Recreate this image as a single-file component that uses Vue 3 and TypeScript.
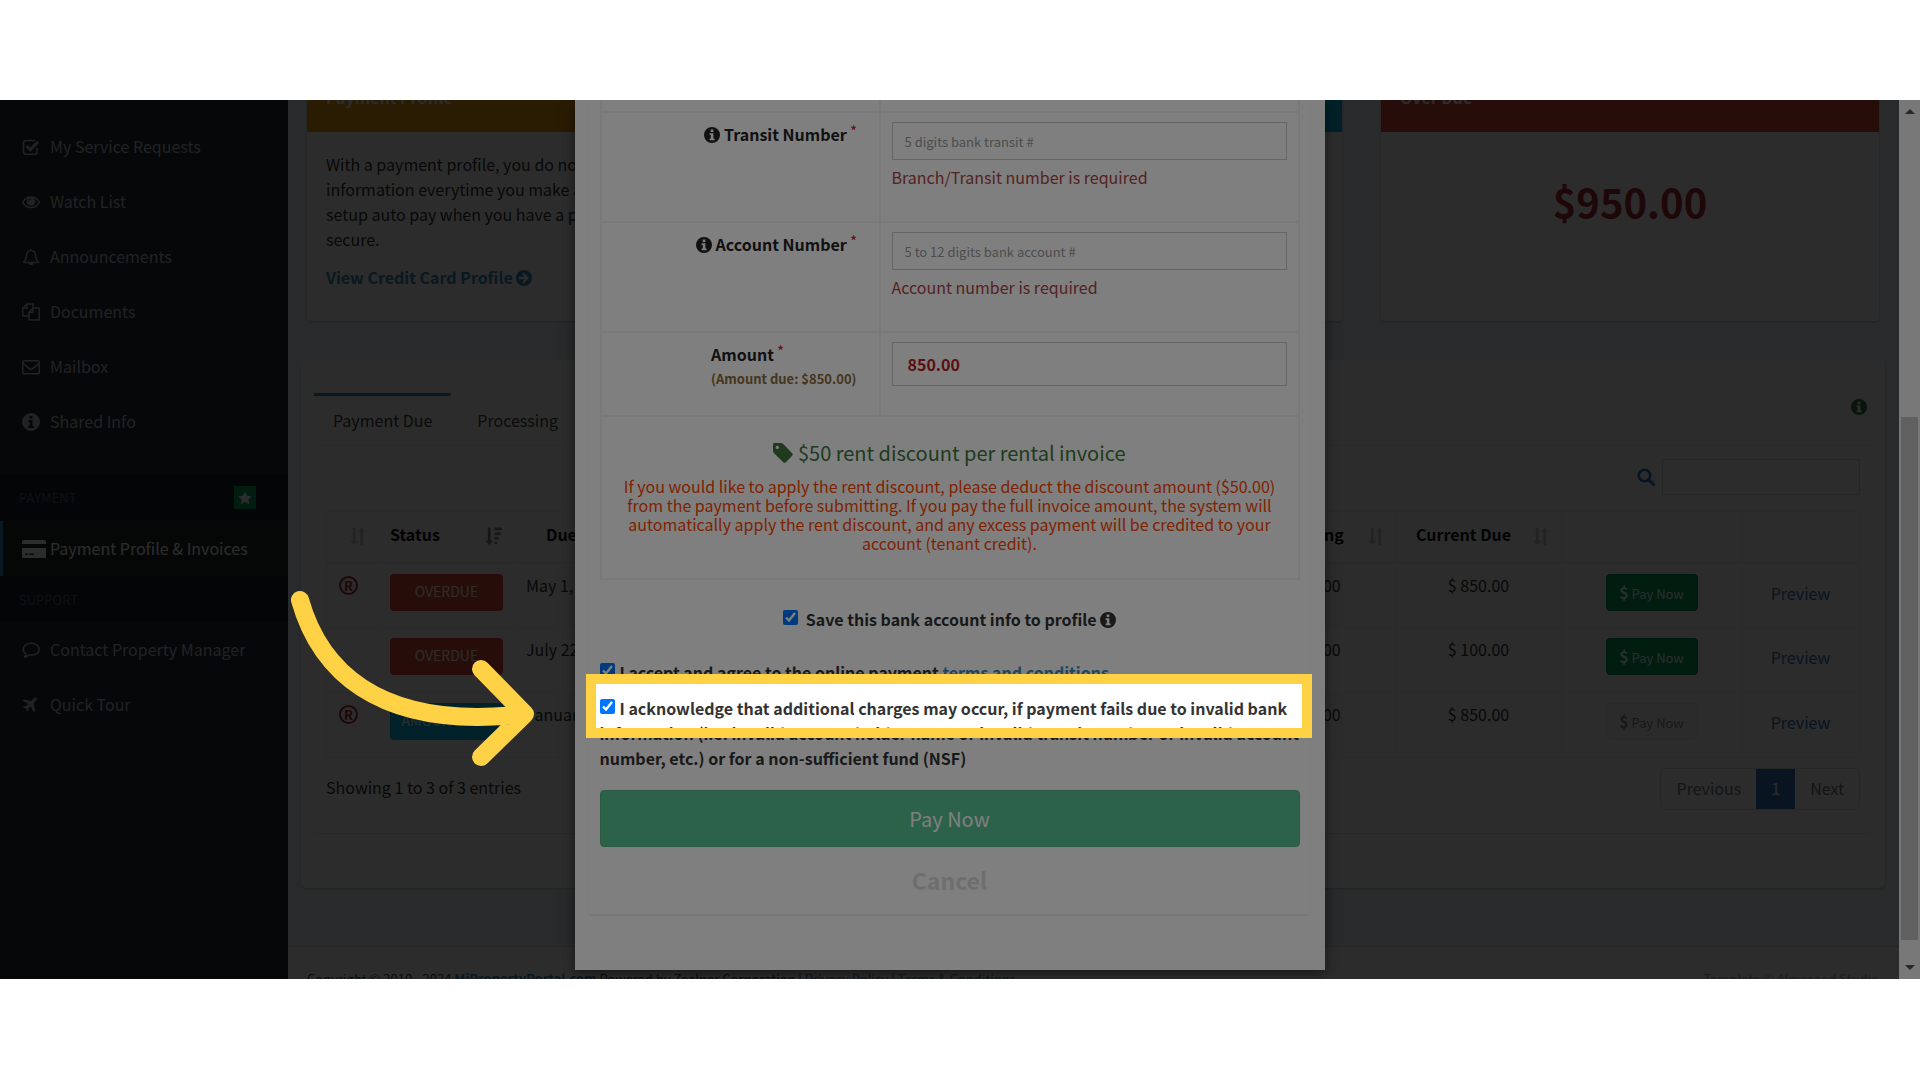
<script setup lang="ts">
import { ref } from 'vue'

interface MenuItem { label: string; icon: string }
interface Invoice {
  recurring: boolean
  status: string
  kind: string
  date: string
  outstanding: string
  due: string
  payable: boolean
}

const mainMenu: MenuItem[] = [
  { label: 'My Service Requests', icon: 'check' },
  { label: 'Watch List', icon: 'eye' },
  { label: 'Announcements', icon: 'bell' },
  { label: 'Documents', icon: 'files' },
  { label: 'Mailbox', icon: 'mail' },
  { label: 'Shared Info', icon: 'info' },
]
const supportMenu: MenuItem[] = [
  { label: 'Contact Property Manager', icon: 'comment' },
  { label: 'Quick Tour', icon: 'plane' },
]
const invoices: Invoice[] = [
  { recurring: true, status: 'OVERDUE', kind: 'red', date: 'May 1, 2024', outstanding: '$ 850.00', due: '$ 850.00', payable: true },
  { recurring: false, status: 'OVERDUE', kind: 'red', date: 'July 22, 2024', outstanding: '$ 100.00', due: '$ 100.00', payable: true },
  { recurring: true, status: 'AMOUNT DUE', kind: 'aqua', date: 'January 1, 2025', outstanding: '$ 850.00', due: '$ 850.00', payable: false },
]

const transit = ref('')
const account = ref('')
const amount = ref('850.00')
const search = ref('')
const saveInfo = ref(true)
const acceptTerms = ref(true)
const acceptCharges = ref(true)
</script>

<template>
  <svg class="defs" aria-hidden="true">
    <symbol id="i-check" viewBox="0 0 18 18"><path d="M15 10v4a2.200 2.200 0 0 1-2.200 2.200H3.700A2.200 2.200 0 0 1 1.500 14V4.700a2.200 2.200 0 0 1 2.200-2.200H13" fill="none" stroke="currentColor" stroke-width="1.600" /><path d="M4.500 8 8.300 11.700 16 3.800" fill="none" stroke="currentColor" stroke-width="3" /></symbol>
    <symbol id="i-eye" viewBox="0 0 18 18"><path d="M.7 9.300C4.400 2.200 13.600 2.200 17.300 9.300 13.600 16.200 4.400 16.200.7 9.300Z" fill="none" stroke="currentColor" stroke-width="1.400" /><circle cx="9" cy="8.500" r="4.300" fill="currentColor" /><path d="M6.500 8.500A2.500 2.500 0 0 1 9 6" fill="none" stroke="#222d32" stroke-width=".8" /></symbol>
    <symbol id="i-bell" viewBox="0 0 18 18"><path d="M9 1v1.500M1.500 14.500C4.500 11.500 4 9.500 4.500 7 5 4 6.500 2.600 9 2.600S13 4 13.500 7c.5 2.500 0 4.500 3 7.500Z" fill="none" stroke="currentColor" stroke-width="1.400" stroke-linejoin="round" /><path d="M6.800 15h4.400a2.200 2.200 0 0 1-4.400 0Z" fill="currentColor" /></symbol>
    <symbol id="i-files" viewBox="0 0 18 18"><path d="M7 13H.8V5.200L5 1h6v4M5 1v4.200H.8M7 17h10.200V5H11L7 9.200ZM11 5v4.200H7" fill="none" stroke="currentColor" stroke-width="1.400" stroke-linejoin="round" /></symbol>
    <symbol id="i-mail" viewBox="0 0 18 18"><rect x=".8" y="2.700" width="16.400" height="13" rx="1.500" fill="none" stroke="currentColor" stroke-width="1.500" /><path d="M1 5.200 7.300 10.600a2.600 2.600 0 0 0 3.400 0L17 5.200" fill="none" stroke="currentColor" stroke-width="1.500" /></symbol>
    <symbol id="i-info" viewBox="0 0 16 16"><path fill-rule="evenodd" d="M8 0a8 8 0 1 1 0 16A8 8 0 0 1 8 0ZM6.700 2.600v2.300h2.700V2.600ZM5.600 6.300v1.700h1.200v3.600H5.600v1.700h5v-1.700H9.400V6.300Z" fill="currentColor" /></symbol>
    <symbol id="i-comment" viewBox="0 0 18 18"><path d="M9.200 2.300c4.500 0 8 2.600 8 5.900s-3.500 5.900-8 5.900c-.8 0-1.500-.1-2.200-.2-1.200 1.100-2.600 1.900-4.400 2.100.8-.9 1.200-1.800 1.300-3C2.200 11.900 1.200 10.100 1.200 8.200c0-3.300 3.500-5.900 8-5.900Z" fill="none" stroke="currentColor" stroke-width="1.500" stroke-linejoin="round" /></symbol>
    <symbol id="i-plane" viewBox="0 0 18 18"><path d="M14.200 1.700c.8.6.4 2-.4 2.900l-2.400 2.600 1.700 7.600-1.400 1.100-3.200-5.800-2.400 2.300.3 2-1 .9-1.500-2.800L1 11l1-1 2 .2 2.300-2.400L.6 4.700 1.800 3.400l7.500 1.600 2.500-2.500c.8-.8 1.800-1.300 2.400-.8Z" fill="currentColor" /></symbol>
    <symbol id="i-card" viewBox="0 0 24 18"><path fill-rule="evenodd" d="M1.500 0h21A1.500 1.500 0 0 1 24 1.500V4H0V1.500A1.500 1.500 0 0 1 1.500 0ZM0 8h24v8.500a1.500 1.500 0 0 1-1.500 1.500h-21A1.500 1.500 0 0 1 0 16.500ZM3 13.500V15h3v-1.500ZM7.500 13.500V15H12v-1.500Z" fill="currentColor" /></symbol>
    <symbol id="i-star" viewBox="0 0 14 14"><path d="m7 .5 2 4.300 4.700.6-3.400 3.200.9 4.700L7 11l-4.200 2.300.9-4.700L.3 5.400 5 4.800Z" fill="currentColor" /></symbol>
    <symbol id="i-sort" viewBox="0 0 18 20"><path d="M4 1h3v14h3L5.500 19.500 1 15h3ZM12 19.500h3v-14h2.500L13.500 1 9.500 5.500H12Z" fill="currentColor" /></symbol>
    <symbol id="i-sortdesc" viewBox="0 0 18 20"><path d="M3 1h3v14h3L4.500 19.500 0 15h3ZM10 1h8v3h-8ZM10 6h6.500v3H10ZM10 11h4.500v3H10ZM10 16h3v2.500h-3Z" fill="currentColor" /></symbol>
    <symbol id="i-search" viewBox="0 0 18 18"><circle cx="7.500" cy="7.500" r="5.700" fill="none" stroke="currentColor" stroke-width="2.600" /><path d="m11.800 11.800 4.700 4.700" stroke="currentColor" stroke-width="3" stroke-linecap="round" /></symbol>
    <symbol id="i-arrow" viewBox="0 0 16 16"><path fill-rule="evenodd" d="M8 0a8 8 0 1 1 0 16A8 8 0 0 1 8 0ZM7.700 2.800 6.200 4.300 8.600 6.800H3v2.400h5.600l-2.400 2.500 1.500 1.500L13 8Z" fill="currentColor" /></symbol>
    <symbol id="i-tag" viewBox="0 0 20 20"><path fill-rule="evenodd" d="M0 1.800A1.700 1.700 0 0 1 1.700 0h6c.9 0 1.800.4 2.500 1l9 9.200c.7.8.7 1.800 0 2.500l-6.300 6.500c-.8.8-1.800.8-2.600 0L1 10.200c-.6-.7-1-1.600-1-2.500ZM4.300 2.700a1.700 1.700 0 1 0 0 3.400 1.700 1.700 0 0 0 0-3.400Z" fill="currentColor" /></symbol>
  </svg>

  <div class="page">
    <div class="stage">
      <div class="app">
        <aside class="sidebar">
          <nav>
            <a v-for="m in mainMenu" :key="m.label" href="#" class="item">
              <svg class="ico"><use :href="'#i-' + m.icon" /></svg>{{ m.label }}
            </a>
            <div class="head first">PAYMENT<span class="star"><svg><use href="#i-star" /></svg></span></div>
            <a href="#" class="item active"><svg class="ico card-ico"><use href="#i-card" /></svg>Payment Profile &amp; Invoices</a>
            <div class="head">SUPPORT</div>
            <a v-for="m in supportMenu" :key="m.label" href="#" class="item">
              <svg class="ico"><use :href="'#i-' + m.icon" /></svg>{{ m.label }}
            </a>
          </nav>
        </aside>

        <div class="main">
          <main class="content">
            <div class="cards">
              <section class="card">
                <h2 class="orange">Payment Profile</h2>
                <div class="card-body">
                  <p>With a payment profile, you do not need to enter your<br>information everytime you make a payment. You can<br>setup auto pay when you have a payment profile. It is<br>secure.</p>
                  <a href="#" class="profile-link">View Credit Card Profile <svg><use href="#i-arrow" /></svg></a>
                </div>
              </section>
              <section class="card"><h2 class="aqua"></h2></section>
              <section class="card">
                <h2 class="red">Over Due</h2>
                <div class="total">$950.00</div>
              </section>
            </div>

            <section class="panel">
              <div class="tabbox">
                <div class="tabs">
                  <a href="#" class="tab on">Payment Due</a>
                  <a href="#" class="tab">Processing</a>
                  <svg class="tab-info"><use href="#i-info" /></svg>
                </div>
                <div class="tabbody">
                  <label class="search"><svg><use href="#i-search" /></svg><input v-model="search" type="search" aria-label="Search invoices"></label>
                  <table class="grid">
                    <colgroup>
                      <col class="c1"><col class="c2"><col><col class="c4"><col class="c5"><col class="c6"><col class="c7">
                    </colgroup>
                    <thead>
                      <tr>
                        <th><svg class="sort"><use href="#i-sort" /></svg></th>
                        <th class="left">Status<svg class="sort dark"><use href="#i-sortdesc" /></svg></th>
                        <th class="left due">Due Date</th>
                        <th>Outstanding<svg class="sort"><use href="#i-sort" /></svg></th>
                        <th>Current Due<svg class="sort"><use href="#i-sort" /></svg></th>
                        <th></th>
                        <th></th>
                      </tr>
                    </thead>
                    <tbody>
                      <tr v-for="r in invoices" :key="r.date">
                        <td class="flag"><span v-if="r.recurring" class="reg">R</span></td>
                        <td class="mid left"><span class="badge" :class="r.kind">{{ r.status }}</span></td>
                        <td class="left">{{ r.date }}</td>
                        <td>{{ r.outstanding }}</td>
                        <td>{{ r.due }}</td>
                        <td class="mid"><button type="button" class="pay" :disabled="!r.payable"><b>$</b> Pay Now</button></td>
                        <td class="prev"><a href="#">Preview</a></td>
                      </tr>
                    </tbody>
                  </table>
                  <div class="below">
                    <span>Showing 1 to 3 of 3 entries</span>
                    <div class="pager"><a href="#">Previous</a><a href="#" class="on">1</a><a href="#">Next</a></div>
                  </div>
                </div>
              </div>
            </section>
          </main>
          <footer class="foot">
            <span>Copyright © 2010 - 2024 <a href="#"><b>MiPropertyPortal.com</b></a> Powered by Zealper Corporation | <a href="#">Privacy Policy</a> | <a href="#">Terms &amp; Conditions</a></span>
            <span class="tpl">Template © Almsaeed Studio</span>
          </footer>
        </div>
      </div>

      <div class="backdrop">
        <form class="modal" @submit.prevent>
          <div class="box">
            <table class="form">
              <colgroup><col class="fl"><col></colgroup>
              <tbody>
                <tr class="stub"><td></td><td></td></tr>
                <tr class="tall">
                  <th><label for="transit"><svg><use href="#i-info" /></svg> Transit Number <sup>*</sup></label></th>
                  <td><input id="transit" v-model="transit" placeholder="5 digits bank transit #"><p>Branch/Transit number is required</p></td>
                </tr>
                <tr class="tall">
                  <th><label for="account"><svg><use href="#i-info" /></svg> Account Number <sup>*</sup></label></th>
                  <td><input id="account" v-model="account" placeholder="5 to 12 digits bank account #"><p>Account number is required</p></td>
                </tr>
                <tr class="amount">
                  <th><label for="amount">Amount <sup>*</sup><small>(Amount due: $850.00)</small></label></th>
                  <td><input id="amount" v-model="amount" class="money"></td>
                </tr>
                <tr class="offer">
                  <td colspan="2">
                    <h3><svg><use href="#i-tag" /></svg> $50 rent discount per rental invoice</h3>
                    <div class="note">If you would like to apply the rent discount, please deduct the discount amount ($50.00) from the payment before submitting. If you pay the full invoice amount, the system will automatically apply the rent discount, and any excess payment will be credited to your account (tenant credit).</div>
                  </td>
                </tr>
              </tbody>
            </table>
            <label class="tick save"><input v-model="saveInfo" type="checkbox">Save this bank account info to profile <svg><use href="#i-info" /></svg></label>
            <label class="tick accept"><input v-model="acceptTerms" type="checkbox">I accept and agree to the online payment <a href="#">terms and conditions</a>.</label>
            <label class="tick ack"><input v-model="acceptCharges" type="checkbox">I acknowledge that additional charges may occur, if payment fails due to invalid bank information (i.e. invalid account holder name or invalid transit number or invalid account number, etc.) or for a non-sufficient fund (NSF)</label>
            <button type="submit" class="submit">Pay Now</button>
            <button type="button" class="cancel">Cancel</button>
          </div>
        </form>
      </div>

      <div class="scrollbar" aria-hidden="true">
        <i class="up"></i><span class="track"><span class="thumb"></span></span><i class="down"></i>
      </div>

      <div class="tour">
        <div class="spot">
          <svg class="pointer" viewBox="0 0 260 200"><path d="M15 20C33 84 87 152 240 134M196 89l44 45-44 43" /></svg>
        </div>
      </div>
    </div>
  </div>
</template>

<style>
body { margin: 0; background: #fff; }
</style>

<style scoped>
* { box-sizing: border-box; }
.defs { position: absolute; width: 0; height: 0; }
.page { padding: 100px 0; font: 16px/25px "Noto Sans CJK SC", "Noto Sans", sans-serif; color: #333; }
.stage { position: relative; height: calc(100vh - 201px); min-height: 600px; overflow: hidden; }
a { color: #3c8dbc; text-decoration: none; }
button, input { font: inherit; color: inherit; }
input { border-radius: 0; }
p, h2, h3 { margin: 0; font-weight: 400; }

.app { display: flex; height: 100%; padding-right: 21px; }
.sidebar { flex: none; width: 288px; background: #222d32; padding-top: 19px; }
.item { display: flex; align-items: center; height: 55px; padding-left: 22px; color: #b8c7ce; white-space: nowrap; }
.item.active { background: #1e282c; color: #fff; border-left: 3px solid #3c8dbc; padding-left: 19px; }
.ico { width: 18px; height: 18px; margin-right: 10px; }
.card-ico { width: 24px; margin-right: 4px; }
.head { display: flex; align-items: center; justify-content: space-between; height: 46px; padding: 0 32px 0 19px; background: #1a2226; color: #4b646f; font-size: 13px; }
.head.first { margin-top: 25px; height: 47px; }
.star { display: flex; align-items: center; justify-content: center; width: 22px; height: 23px; background: #00a65a; color: #fff; }
.star svg { width: 14px; height: 14px; }

.main { flex: 1; min-width: 0; background: #ecf0f5; }
.content { margin-top: -38px; padding: 0 20px 0 19px; }
.cards { display: flex; gap: 39px; }
.card { flex: 1; min-width: 0; height: 259px; background: #fff; border-radius: 4px; box-shadow: 0 1px 2px rgba(0, 0, 0, .2); overflow: hidden; }
.card h2 { height: 70px; padding: 0 19px; font-size: 16px; font-weight: 700; line-height: 71px; color: #fff; }
.orange { background: #f39c12; }
.aqua { background: #00c0ef; }
.red { background: #dd4b39; }
.card-body { padding: 20px 19px; white-space: nowrap; }
.profile-link { display: block; margin-top: 13px; font-weight: 700; }
.profile-link svg { width: 16px; height: 16px; vertical-align: -2px; }
.total { padding-top: 39px; font-size: 40px; line-height: 60px; font-weight: 700; text-align: center; color: #b02a30; }

.panel { margin: 39px -6px 0; padding: 33px 13px 55px; background: #fff; border-radius: 5px; box-shadow: 0 1px 2px rgba(0, 0, 0, .2); }
.tabbox { border-radius: 4px; box-shadow: 0 1px 1px rgba(0, 0, 0, .1); }
.tabs { display: flex; align-items: stretch; height: 53px; border-bottom: 1px solid #f4f4f4; }
.tab { padding: 0 20px 0 26px; line-height: 48px; border-top: 3px solid transparent; color: #444; }
.tab.on { padding: 0 18px 0 19px; border-top-color: #3c8dbc; border-right: 1px solid #f4f4f4; }
.tab-info { width: 16px; height: 16px; margin: 6px 5px 0 auto; color: #3c763d; }
.tabbody { padding: 13px 12px 23px; }
.search { display: flex; align-items: center; justify-content: flex-end; gap: 7px; color: #337ab7; }
.search svg { width: 18px; height: 18px; }
.search input { width: 198px; height: 36px; border: 1px solid #d2d6de; background: #fff; }
.grid { width: 100%; margin-top: 16px; table-layout: fixed; border-collapse: collapse; border: 1px solid #f4f4f4; }
.c1 { width: 52px; } .c2 { width: 136px; } .c4 { width: 172px; } .c5 { width: 165px; } .c6 { width: 181px; } .c7 { width: 117px; }
.grid th { position: relative; height: 51px; padding: 0 42px 5px 11px; color: #111; border: 1px solid #f4f4f4; border-bottom-width: 3px; white-space: nowrap; }
.grid .left { text-align: left; }
.grid th.due { padding-left: 31px; }
.grid td { height: 65px; padding: 9px 12px 0 11px; border: 1px solid #f4f4f4; text-align: center; vertical-align: top; white-space: nowrap; overflow: hidden; }
.grid td.mid { padding-top: 10px; }
.grid td.prev { padding-top: 17px; }
.grid td.flag { padding: 9px 17px 0 9px; }
.prev a { color: #337ab7; }
.grid tbody tr:nth-child(odd) { background: #fcfcfc; }
.sort { position: absolute; right: 12px; top: 14px; width: 17px; height: 20px; color: #ccc; }
.sort.dark { color: #888; }
.reg { display: inline-block; width: 19px; height: 19px; border: 2px solid #b02a30; border-radius: 50%; color: #b02a30; font-size: 13px; line-height: 15px; font-weight: 700; vertical-align: top; margin-top: 3px; }
.badge { display: block; width: 113px; height: 37px; border-radius: 4px; color: #fff; font-size: 14px; line-height: 34px; text-align: center; }
.pay { width: 92px; height: 37px; padding: 0; border: 1px solid #008d4c; border-radius: 4px; background: #00a65a; color: #fff; font-size: 13px; line-height: 33px; vertical-align: top; }
.pay b { font-size: 16px; }
.pay:disabled { background: #fafafa; border-color: #eee; color: #888; }
.below { display: flex; justify-content: space-between; margin-top: 10px; line-height: 39px; }
.pager { display: flex; height: 42px; border: 1px solid #ddd; border-radius: 5px; }
.pager a { padding: 0 15px; color: #777; }
.pager .on { background: #337ab7; color: #fff; }
.foot { display: flex; justify-content: space-between; margin-top: 58px; padding: 19px 20px 20px 19px; background: #fff; border-top: 1px solid #d2d6de; color: #444; white-space: nowrap; font-size: 13px; }
.tpl { color: #aaa; }

.backdrop { position: absolute; inset: 0 21px 0 0; display: flex; justify-content: center; align-items: flex-start; background: rgba(0, 0, 0, .65); }
.modal { width: 750px; padding: 0 13px 54px 12px; background: #fff; box-shadow: 0 3px 12px rgba(0, 0, 0, .5); }
.box { padding: 0 11px 19px 12px; border: 1px solid #fafafa; border-top: 0; border-bottom: 2px solid #f0f0f0; border-radius: 0 0 5px 5px; }
.form { width: 100%; table-layout: fixed; border-collapse: collapse; }
.form th, .form td { border: 2px solid #f2f2f2; padding: 0; vertical-align: top; }
.fl { width: 279px; }
.stub td { height: 12px; border-top: 0 !important; }
.tall { height: 110px; }
.amount { height: 84px; }
.offer { height: 163px; }
.form th { padding: 9px 22px 0 0; text-align: right; }
.form th label { display: inline-block; text-align: left; color: #222; }
.form svg, .tick svg { width: 16px; height: 16px; vertical-align: -2px; }
sup { font-size: 12px; line-height: 0; color: #dd1c1c; vertical-align: 6px; }
small { display: block; font-size: 13px; line-height: 23px; color: #8a6d3b; }
.form td { padding: 9px 11px 0; }
.form td input { display: block; width: 100%; height: 38px; padding: 0 12px; border: 1px solid #ccc; background: #fff; font-size: 13px; }
.form input::placeholder { color: #999; }
.form p { margin-top: 5px; color: #a94442; }
.form td input.money { height: 44px; padding: 0 15px; font-size: 16px; font-weight: 700; color: #b71c1c; }
.offer td { padding: 20px 14px 0; text-align: center; }
.offer h3 { font-size: 20px; line-height: 32px; color: #3c763d; }
.form .offer svg { width: 20px; height: 20px; }
.form .offer td { padding: 20px 14px 0; }
.note { margin-top: 8px; line-height: 19px; color: #ff4500; }
.tick { display: block; font-weight: 700; }
.tick input { width: 15px; height: 15px; margin: 0 5px 0 0; vertical-align: 1px; }
.save { margin-top: 27px; text-align: center; }
.save input { margin-right: 8px; }
.accept { margin-top: 28px; }
.ack { margin: 11px -10px 0 0; }
.submit { display: block; width: 100%; height: 57px; margin-top: 19px; border: 1px solid #008d4c; border-radius: 4px; background: #00a65a; color: #fff; font-size: 20px; opacity: .65; }
.cancel { display: block; margin: 18px auto 0; height: 30px; padding: 0; border: 0; background: none; font-size: 23px; line-height: 30px; font-weight: 700; color: #ddd; }

.scrollbar { position: absolute; inset: 0 0 0 auto; display: flex; flex-direction: column; align-items: center; width: 21px; background: #f1f1f1; }
.scrollbar i { flex: none; margin: 9px 0; border: 5px solid transparent; }
.up { border-top: 0 !important; border-bottom-color: #505050 !important; }
.down { border-bottom: 0 !important; border-top-color: #505050 !important; }
.track { flex: 1; display: flex; align-items: flex-end; padding-bottom: 16px; }
.thumb { width: 17px; height: 64%; background: #c1c1c1; }

.tour { position: absolute; inset: 0 23px 0 0; display: flex; justify-content: center; align-items: flex-start; pointer-events: none; }
.spot { position: relative; width: 726px; height: 64px; margin-top: 574px; border: 10px solid #ffd145; box-shadow: 0 0 0 9999px rgba(0, 0, 0, .5); }
.pointer { position: absolute; left: -311px; top: -104px; width: 260px; height: 200px; fill: none; stroke: #ffd145; stroke-width: 18px; stroke-linecap: round; stroke-linejoin: round; }
</style>
